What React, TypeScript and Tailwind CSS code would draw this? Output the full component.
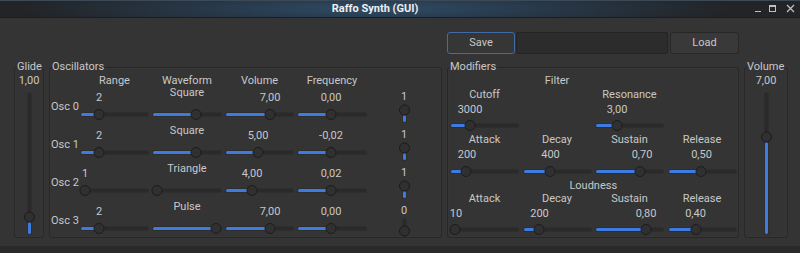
import React from "react";

type Cell = { v: string; p: number };

function HSlider({ pos }: { pos: number }) {
  return (
    <div className="relative h-[11px] w-full">
      <div className="absolute left-0 right-0 top-[4px] h-[3px] rounded-full bg-[#2a2a2a] shadow-[0_0_0_1px_#2e2e2e]" />
      <div className="absolute left-0 top-[4px] h-[3px] rounded-full bg-[#3d7be0]" style={{ width: pos }} />
      <div
        className="absolute top-0 h-[11px] w-[11px] -translate-x-1/2 rounded-full border border-[#1c1c1c] bg-[#303030]"
        style={{ left: pos }}
      />
    </div>
  );
}

function VSlider({ className, len, pos }: { className: string; len: number; pos: number }) {
  return (
    <div className={`relative flex w-[11px] justify-center ${className}`}>
      <div className="h-full w-[3px] rounded-full bg-[#2a2a2a] shadow-[0_0_0_1px_#2e2e2e]" />
      <div
        className="absolute bottom-0 left-[4px] w-[3px] rounded-full bg-[#3d7be0]"
        style={{ height: Math.max(0, len - pos - 5) }}
      />
      <div
        className="absolute left-0 h-[11px] w-[11px] -translate-y-1/2 rounded-full border border-[#1c1c1c] bg-[#303030]"
        style={{ top: pos }}
      />
    </div>
  );
}

function Value({ c, className = "" }: { c: Cell; className?: string }) {
  return (
    <div className={`h-[14px] whitespace-nowrap leading-[14px] ${className}`} style={{ paddingLeft: c.p }}>
      <span className="inline-block -translate-x-1/2">{c.v}</span>
    </div>
  );
}

function Group({ title, className, children }: { title: string; className: string; children: React.ReactNode }) {
  return (
    <div className={`relative h-[178px] shrink-0 pt-[7px] ${className}`}>
      <div className="h-full rounded-[3px] border border-[#282828] shadow-[inset_0_0_0_1px_#363636]">{children}</div>
      <div className="absolute left-[3px] top-0 bg-[#343434] pr-[1px] leading-[14px]">{title}</div>
    </div>
  );
}

const osc = [
  { name: "Osc 0", range: { v: "2", p: 18 }, wave: { v: "Square", p: 43 }, vol: { v: "7,00", p: 44 }, freq: { v: "0,00", p: 33 }, mini: "1", on: true },
  { name: "Osc 1", range: { v: "2", p: 18 }, wave: { v: "Square", p: 43 }, vol: { v: "5,00", p: 32 }, freq: { v: "-0,02", p: 33 }, mini: "1", on: true },
  { name: "Osc 2", range: { v: "1", p: 4 }, wave: { v: "Triangle", p: 4 }, vol: { v: "4,00", p: 26 }, freq: { v: "0,02", p: 33 }, mini: "1", on: true },
  { name: "Osc 3", range: { v: "2", p: 18 }, wave: { v: "Pulse", p: 63 }, vol: { v: "7,00", p: 44 }, freq: { v: "0,00", p: 33 }, mini: "0", on: false },
];

function OscRow({ r }: { r: (typeof osc)[number] }) {
  return (
    <>
      <div className="flex h-[32px] items-center whitespace-nowrap pl-[1px] leading-[14px]">{r.name}</div>
      <div className="flex flex-col">
        <Value c={r.range} />
        <div className="flex h-[18px] items-center">
          <HSlider pos={r.range.p} />
        </div>
      </div>
      <div className="flex flex-col">
        <div className="h-[14px] text-center leading-[14px]">
          <span className="inline-block -translate-y-[5px]">{r.wave.v}</span>
        </div>
        <div className="flex h-[18px] items-center">
          <HSlider pos={r.wave.p} />
        </div>
      </div>
      <div className="flex flex-col">
        <Value c={r.vol} />
        <div className="flex h-[18px] items-center">
          <HSlider pos={r.vol.p} />
        </div>
      </div>
      <div className="flex flex-col">
        <Value c={r.freq} />
        <div className="flex h-[18px] items-center">
          <HSlider pos={r.freq.p} />
        </div>
      </div>
      <div className="flex flex-col items-center pr-[4px]">
        <div className="h-[12px] leading-[12px]">{r.mini}</div>
        <VSlider className="mt-[2px] h-[17px]" len={17} pos={r.on ? 5 : 12} />
      </div>
    </>
  );
}

function MLabel({ t }: { t: string }) {
  return <div className="whitespace-nowrap text-center leading-[14px]">{t}</div>;
}

function MSlider({ p }: { p: number }) {
  return (
    <div className="flex items-center">
      <HSlider pos={p} />
    </div>
  );
}

export default function App() {
  return (
    <div className="flex h-[253px] w-[800px] flex-col overflow-hidden bg-[#292929] font-['Roboto',sans-serif] text-[11px] text-[#c8c8c8]">
      {/* title bar */}
      <div className="flex h-[18px] shrink-0 items-center border-b border-[#1d1d1d] bg-[radial-gradient(ellipse_45%_140%_at_47%_50%,#2f4c66_0%,#28394a_45%,#222427_100%)] shadow-[inset_0_1px_0_#3c4a58]">
        <div className="flex-1 text-center text-[11px] font-bold leading-[16px] text-[#eeeeee]">Raffo Synth (GUI)</div>
        <div className="flex w-[50px] items-center gap-[8px] pl-[5px] text-[#c0c0c0]">
          <div className="mt-[5px] h-[1px] w-[6px] bg-[#c0c0c0]" />
          <div className="h-[7px] w-[7px] border border-t-2 border-[#c0c0c0]" />
          <svg width="9" height="9" viewBox="0 0 9 9" className="ml-[2px]">
            <path d="M1 1L8 8M8 1L1 8" stroke="#c0c0c0" strokeWidth="1.3" />
          </svg>
        </div>
      </div>

      {/* content */}
      <div className="flex flex-1 flex-col bg-[#343434] px-[14px]">
        <div className="ml-[433px] mt-[14px] flex h-[22px] shrink-0">
          <div className="flex w-[68px] items-center justify-center rounded-[3px] border border-[#3f6ca8] bg-[#363636]">Save</div>
          <div className="ml-[1px] w-[152px] rounded-[2px] border border-[#242424] bg-[#2c2c2c]" />
          <div className="ml-[2px] flex w-[69px] items-center justify-center rounded-[3px] border border-[#272727] bg-[#393939]">Load</div>
        </div>

        <div className="mt-[6px] flex gap-[5px]">
          <Group title="Glide" className="w-[30px]">
            <div className="flex flex-col items-center pt-[6px]">
              <div className="h-[14px] leading-[14px]">1,00</div>
              <VSlider className="mt-[5px] h-[141px]" len={141} pos={124} />
            </div>
          </Group>

          <Group title="Oscillators" className="w-[393px]">
            <div className="grid grid-cols-[26px_67px_68px_67px_68px_1fr] gap-x-[5px] gap-y-[6px] pt-[6px]">
              <div className="h-[11px]" />
              <div className="h-[11px] text-center leading-[14px]">Range</div>
              <div className="h-[11px] text-center leading-[14px]">Waveform</div>
              <div className="h-[11px] text-center leading-[14px]">Volume</div>
              <div className="h-[11px] text-center leading-[14px]">Frequency</div>
              <div className="h-[11px]" />
              {osc.map((r) => (
                <OscRow key={r.name} r={r} />
              ))}
            </div>
          </Group>

          <Group title="Modifiers" className="w-[292px]">
            <div className="grid grid-cols-[67px_67px_67px_67px] grid-rows-[14px_15px_14px_16px_14px_16px_17px_12px_15px_14px_17px] gap-x-[5.5px] pl-[3px] pt-[6px]">
              <div className="col-span-3 text-center leading-[14px]">Filter</div>
              <div />
              <MLabel t="Cutoff" />
              <div />
              <MLabel t="Resonance" />
              <div />
              <Value c={{ v: "3000", p: 19 }} />
              <div />
              <Value c={{ v: "3,00", p: 21 }} />
              <div />
              <MSlider p={19} />
              <div />
              <MSlider p={21} />
              <div />
              <MLabel t="Attack" />
              <MLabel t="Decay" />
              <MLabel t="Sustain" />
              <MLabel t="Release" />
              <Value c={{ v: "200", p: 16 }} className="pt-[1px]" />
              <Value c={{ v: "400", p: 27 }} className="pt-[1px]" />
              <Value c={{ v: "0,70", p: 46 }} className="pt-[1px]" />
              <Value c={{ v: "0,50", p: 33 }} className="pt-[1px]" />
              <MSlider p={15} />
              <MSlider p={26} />
              <MSlider p={44} />
              <MSlider p={32} />
              <div className="col-span-4 text-center leading-[12px]">Loudness</div>
              <MLabel t="Attack" />
              <MLabel t="Decay" />
              <MLabel t="Sustain" />
              <MLabel t="Release" />
              <Value c={{ v: "10", p: 5 }} />
              <Value c={{ v: "200", p: 16 }} />
              <Value c={{ v: "0,80", p: 50 }} />
              <Value c={{ v: "0,40", p: 27 }} />
              <MSlider p={4} />
              <MSlider p={15} />
              <MSlider p={50} />
              <MSlider p={27} />
            </div>
          </Group>

          <Group title="Volume" className="w-[44px]">
            <div className="flex flex-col items-center pt-[6px]">
              <div className="h-[14px] leading-[14px]">7,00</div>
              <VSlider className="mt-[5px] h-[141px]" len={141} pos={44} />
            </div>
          </Group>
        </div>
      </div>
      <div className="h-[7px] shrink-0 bg-[#2a2a2a]" />
    </div>
  );
}
